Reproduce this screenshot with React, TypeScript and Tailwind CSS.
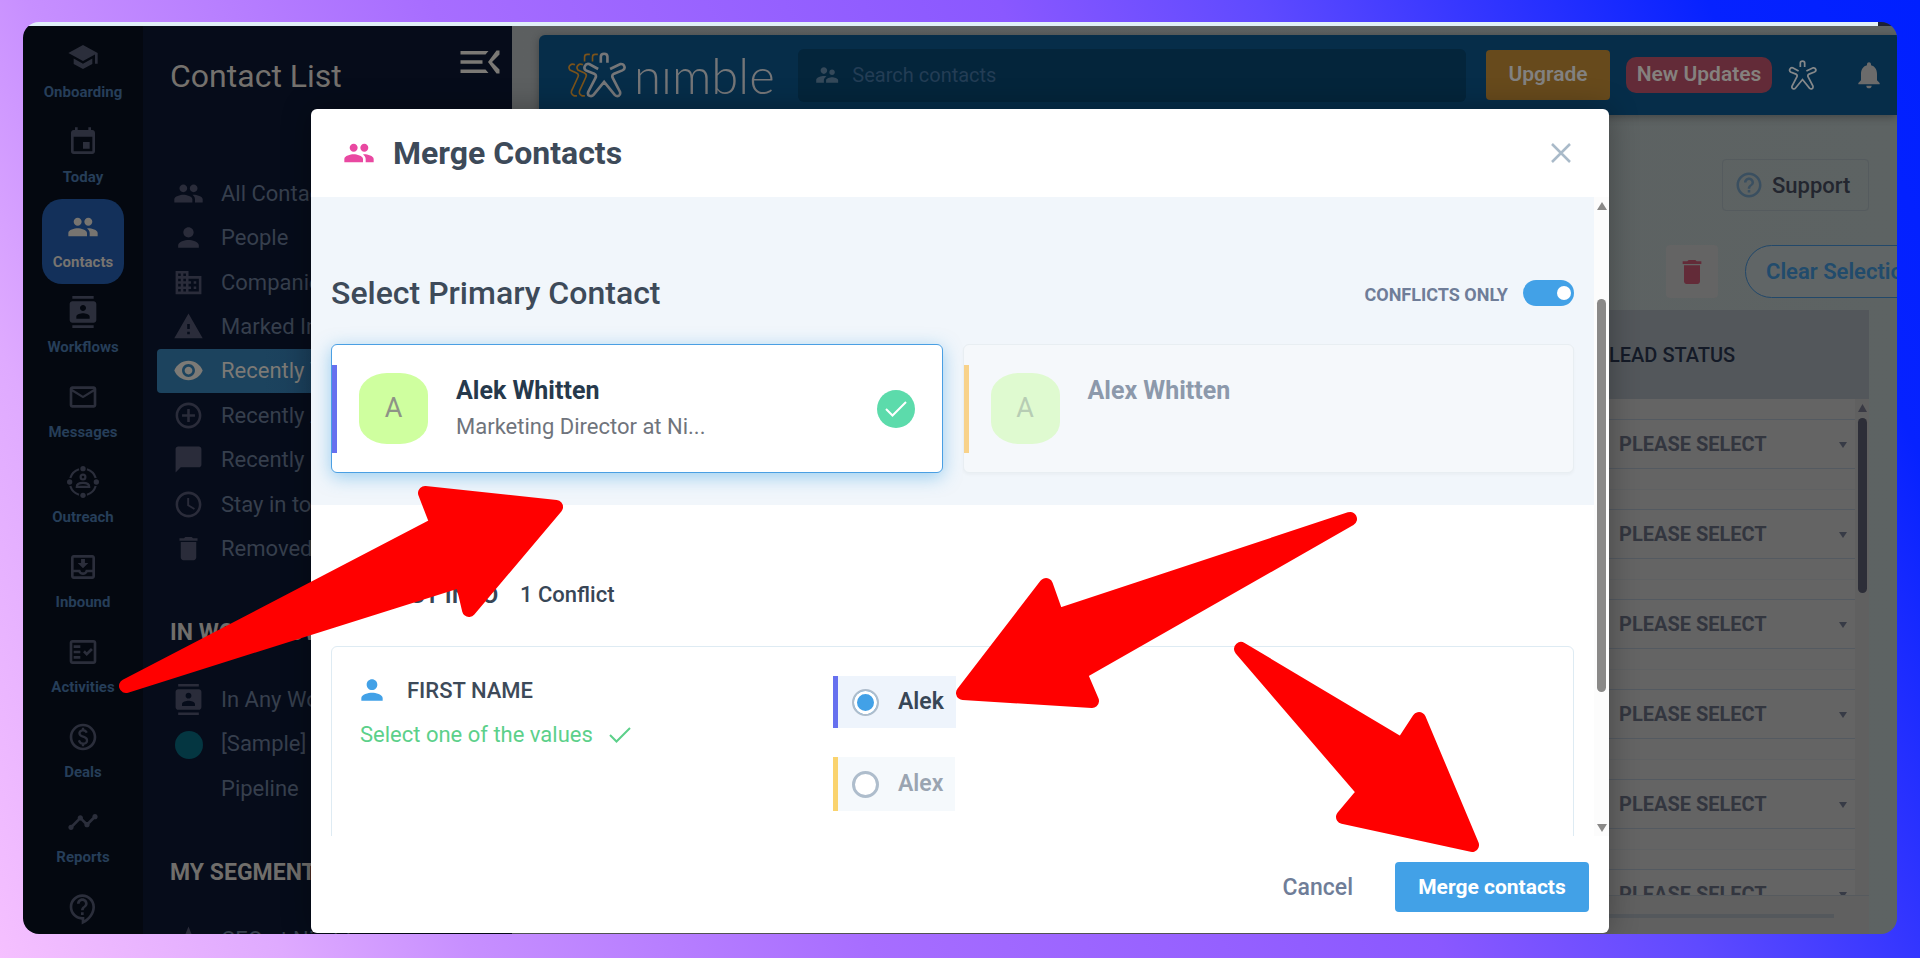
import React from "react";
import type { IconType } from "react-icons";
import {
  MdAccessTime,
  MdChatBubble,
  MdContacts,
  MdControlPoint,
  MdDelete,
  MdDomain,
  MdEvent,
  MdHelpOutline,
  MdMailOutline,
  MdNavigation,
  MdNotifications,
  MdOutlineContactSupport,
  MdOutlineFactCheck,
  MdOutlineMoveToInbox,
  MdOutlinePaid,
  MdPeople,
  MdPerson,
  MdSchool,
  MdSupervisorAccount,
  MdTimeline,
  MdVisibility,
  MdWarning,
} from "react-icons/md";

type IconProps = { className?: string };

function OutreachIcon({ className }: IconProps) {
  return (
    <svg viewBox="0 0 36 36" className={className} fill="none" stroke="currentColor" strokeWidth="2.5">
      <path d="M22.5 3.7a15 15 0 0 1 9.8 9.8M32.3 22.5a15 15 0 0 1-9.8 9.8M13.5 32.3a15 15 0 0 1-9.8-9.8M3.7 13.5a15 15 0 0 1 9.8-9.8" />
      <circle cx="18" cy="12.5" r="2.7" />
      <path d="M11 23.5c0-3.5 4-4.5 7-4.5s7 1 7 4.5z" />
      <g fill="currentColor" stroke="none">
        <circle cx="18" cy="3" r="3" />
        <circle cx="33" cy="18" r="3" />
        <circle cx="18" cy="33" r="3" />
        <circle cx="3" cy="18" r="3" />
      </g>
    </svg>
  );
}

function MenuIcon() {
  return (
    <svg viewBox="0 0 39 24" className="h-6 w-10" fill="currentColor">
      <path d="M0 1h28l-3 3.5H0zM0 10.2h22v3.5H0zM0 19.5h25l3 3.5H0zM36 .5h3v4L31.500 12l7.500 7.500v4h-3L27.500 12z" />
    </svg>
  );
}

function CheckIcon() {
  return (
    <svg viewBox="0 0 22 16" className="h-4 w-[22px]" fill="none" stroke="currentColor" strokeWidth="2">
      <path d="M1 8l6.500 6.500L21 1" />
    </svg>
  );
}

const figure =
  "M136 58V40q0-9 10-9t10 9V58M128 77L101 62q-9-2-13 6t3 13L116 91Q124 95 120 104L98 146q-3 9 4 12t12-3L146 116L178 155q6 6 12 3t4-12L172 104Q168 95 176 91L201 81q9-4 6-12t-12-7L164 77";

function Figure({ className }: IconProps) {
  return (
    <svg viewBox="80 26 132 138" className={className} fill="none" stroke="currentColor" strokeWidth="8">
      <path d={figure} />
    </svg>
  );
}

function Logo() {
  return (
    <div className="flex w-[203px] items-center text-[#757678]">
      <svg viewBox="34 26 178 138" className="h-[46px] w-[59px] shrink-0" fill="none" strokeWidth="5">
        <g stroke="#7a531b">
          <path d="M111 54V41q0-8 8-8h8M87 54V41q0-8 8-8h8" />
          <path d="M82 64q-9-4-15 2t0 14l20 9q8 4 4 12L74 138q-8 14 6 20h8" />
          <path d="M58 64q-9-4-15 2t0 14l20 9q8 4 4 12L50 138q-8 14 6 20h8" />
        </g>
        <path stroke="currentColor" strokeWidth="8" d={figure} />
      </svg>
      <span className="ml-2 font-['Lato'] text-[49px] leading-[58px] font-light">nımble</span>
    </div>
  );
}

const navItems: { label: string; icon: IconType | typeof OutreachIcon; active?: boolean }[] = [
  { label: "Onboarding", icon: MdSchool },
  { label: "Today", icon: MdEvent },
  { label: "Contacts", icon: MdPeople, active: true },
  { label: "Workflows", icon: MdContacts },
  { label: "Messages", icon: MdMailOutline },
  { label: "Outreach", icon: OutreachIcon },
  { label: "Inbound", icon: MdOutlineMoveToInbox },
  { label: "Activities", icon: MdOutlineFactCheck },
  { label: "Deals", icon: MdOutlinePaid },
  { label: "Reports", icon: MdTimeline },
];

const lists: { label: string; icon: IconType; active?: boolean }[] = [
  { label: "All Contacts", icon: MdPeople },
  { label: "People", icon: MdPerson },
  { label: "Companies", icon: MdDomain },
  { label: "Marked Important", icon: MdWarning },
  { label: "Recently Viewed", icon: MdVisibility, active: true },
  { label: "Recently Added", icon: MdControlPoint },
  { label: "Recently Contacted", icon: MdChatBubble },
  { label: "Stay in touch", icon: MdAccessTime },
  { label: "Removed", icon: MdDelete },
];

function SideNav() {
  return (
    <nav className="flex w-[120px] shrink-0 flex-col items-center bg-[#040810] pt-[3px]">
      {navItems.map(({ label, icon: Icon, active }) => (
        <a
          key={label}
          href="#"
          className={`flex h-[85px] w-[82px] shrink-0 flex-col items-center rounded-[20px] pt-3 ${
            active ? "bg-[#13305a] text-[#777470]" : "text-[#2b2e3b]"
          }`}
        >
          <Icon className="size-8" />
          <span className={`mt-2 text-[15px] leading-[22px] font-bold ${active ? "" : "text-[#263e59]"}`}>{label}</span>
        </a>
      ))}
      <a href="#" aria-label="Help" className="pt-[14px] text-[#2b2e3b]">
        <MdOutlineContactSupport className="size-8" />
      </a>
    </nav>
  );
}

function ListRow({ label, icon: Icon, active }: { label: string; icon: IconType; active?: boolean }) {
  return (
    <a
      href="#"
      className={`flex min-h-11 flex-1 items-center gap-[17px] rounded-l-sm pl-4 text-[22px] whitespace-nowrap ${
        active ? "bg-linear-to-r from-[#1c435e] from-30% to-[#153050] text-[#7c7a76]" : "text-[#363f4d]"
      }`}
    >
      <Icon className={`size-[31px] ${active ? "" : "text-[#2a2c3a]"}`} />
      {label}
    </a>
  );
}

function ContactPanel() {
  return (
    <aside className="w-[369px] shrink-0 overflow-hidden bg-[#060c1a]">
      <div className="flex justify-between pr-3 pl-[27px]">
        <h1 className="pt-[30px] text-[32px] leading-10 text-[#74716d]">Contact List</h1>
        <button type="button" aria-label="Collapse menu" className="mt-6 h-6 text-[#7b7975]">
          <MenuIcon />
        </button>
      </div>
      <div className="mt-[75px] ml-[14px] flex h-[400px] flex-col">
        {lists.map((item) => (
          <ListRow key={item.label} {...item} />
        ))}
      </div>
      <h2 className="mt-[42px] pl-[27px] text-[23px] leading-10 font-bold text-[#706e6b]">IN WORKFLOWS</h2>
      <div className="mt-6 ml-[14px] flex flex-col">
        <ListRow label="In Any Workflow" icon={MdContacts} />
        <a href="#" className="flex gap-[18px] pl-[18px] text-[22px] leading-[45px] text-[#363f4d]">
          <span className="mt-[10px] size-7 shrink-0 rounded-full bg-[#043641]" />
          <span className="w-28">[Sample] Pipeline</span>
        </a>
      </div>
      <h2 className="mt-[42px] pl-[27px] text-[23px] leading-10 font-bold text-[#706e6b]">MY SEGMENTS</h2>
      <div className="mt-6 ml-[14px] flex flex-col">
        <ListRow label="CEO at Nimble" icon={MdNavigation} />
      </div>
    </aside>
  );
}

function Header() {
  return (
    <header className="flex h-20 shrink-0 items-center rounded-tl-md bg-[#062d49] pr-3 pl-7 shadow-[0_2px_8px_rgba(0,0,0,0.3)]">
      <Logo />
      <label className="ml-7 flex h-[53px] flex-1 items-center gap-3 rounded-md bg-[#04253b] pl-4 text-[#35495a]">
        <MdSupervisorAccount className="size-7" />
        <input
          type="text"
          aria-label="Search contacts"
          placeholder="Search contacts"
          className="w-full bg-transparent text-[20px] outline-none placeholder:text-[#233d55]"
        />
      </label>
      <button type="button" className="ml-5 h-[50px] w-[124px] rounded-sm bg-[#674a1c] text-[21px] font-semibold text-[#828180]">
        Upgrade
      </button>
      <button
        type="button"
        className="ml-4 h-9 w-[146px] rounded-[10px] bg-[#632b38] text-[21px] font-semibold whitespace-nowrap text-[#85817e]"
      >
        New Updates
      </button>
      <Figure className="ml-4 h-[30px] w-[29px] text-[#85888a]" />
      <MdNotifications className="ml-9 size-8 text-[#6b6b6b]" />
    </header>
  );
}

function LeadTable() {
  return (
    <div className="mt-3 mr-7 ml-5 min-h-0 flex-1">
      <div className="flex h-[586px] overflow-hidden border-b border-[#565a5e] bg-[#646464]">
        <table className="flex-1 self-start">
          <thead>
            <tr className="h-[89px] bg-[#53575b]">
              <th aria-label="Name" />
              <th className="w-[300px] pl-[54px] text-left text-[20px] font-medium text-[#141a27]">LEAD STATUS</th>
            </tr>
          </thead>
          <tbody>
            {[0, 1, 2, 3, 4, 5].map((row) => (
              <tr key={row} className="h-[90px] border-b border-[#5f6163]">
                <td />
                <td>
                  <div className="relative border-y border-[#545a61]">
                    <select
                      aria-label={`Lead status ${row + 1}`}
                      className="h-12 w-full appearance-none bg-transparent pl-16 text-[20px] font-bold text-[#33363f]"
                    >
                      <option>PLEASE SELECT</option>
                    </select>
                    <svg viewBox="0 0 8 6" className="absolute top-[22px] right-2 h-[6px] w-2" fill="#373b46">
                      <path d="M0 0h8L4 6z" />
                    </svg>
                  </div>
                </td>
              </tr>
            ))}
          </tbody>
        </table>
        <div className="flex w-[14px] shrink-0 flex-col items-center bg-[linear-gradient(#53575b_89px,#606060_89px)] pt-[94px]">
          <svg viewBox="0 0 9 8" className="h-2 w-[9px]" fill="#3a3a44">
            <path d="M4.5 0L9 8H0z" />
          </svg>
          <div className="mt-[6px] h-[175px] w-[9px] rounded-full bg-[#2d2e38]" />
        </div>
      </div>
      <div className="h-[38px] bg-[#606060] pt-[18px] pr-[35px]">
        <div className="h-1 bg-[#54585c]" />
      </div>
    </div>
  );
}

function Main() {
  return (
    <main className="flex min-w-0 flex-1 flex-col bg-linear-to-r from-[#5c5f60] to-[#5d6363] pt-[9px] pl-[27px]">
      <Header />
      <div className="mt-11 mr-7 flex justify-end">
        <button
          type="button"
          className="flex h-[52px] w-[147px] items-center gap-2 rounded-sm border border-[#555b5e] pl-[11px] text-[22px] font-medium text-[#23262f]"
        >
          <MdHelpOutline className="size-[30px] text-[#3a4f60]" />
          Support
        </button>
      </div>
      <div className="mt-[34px] -mr-12 flex justify-end gap-[27px]">
        <button type="button" aria-label="Delete" className="flex h-[53px] w-[52px] items-center justify-center rounded-sm bg-[#646464]">
          <MdDelete className="size-8 text-[#632b38]" />
        </button>
        <button
          type="button"
          className="h-[53px] w-[200px] rounded-full border border-[#22486a] bg-[#606566] pl-5 text-left text-[22px] font-semibold whitespace-nowrap text-[#214b6c]"
        >
          Clear Selection
        </button>
      </div>
      <LeadTable />
    </main>
  );
}

function ContactCard({ name, title, selected }: { name: string; title?: string; selected?: boolean }) {
  return (
    <button
      type="button"
      aria-pressed={!!selected}
      className={`flex h-[129px] flex-1 items-center rounded-md border pr-[27px] text-left ${
        selected
          ? "border-[#4a9fe3] bg-white shadow-[0_4px_18px_rgba(66,165,230,0.5)]"
          : "border-[#e8eef2] bg-[#f5f8fb] shadow-[0_2px_3px_rgba(0,0,0,0.03)]"
      }`}
    >
      <span className={`h-[88px] w-[5px] ${selected ? "bg-[#6670ef]" : "bg-[#f8d28a]"}`} />
      <span
        className={`ml-[22px] flex h-[71px] w-[69px] items-center justify-center rounded-[28px/22px] text-[27px] ${
          selected ? "bg-[#cfff9f] text-[#8e9386]" : "bg-[#dffad0] text-[#b7cdb4]"
        }`}
      >
        A
      </span>
      <span className="ml-7 h-[71px] flex-1">
        <span className={`block text-[25px] leading-9 font-bold ${selected ? "text-[#26394c]" : "text-[#8c99ab]"}`}>
          {name}
        </span>
        <span className="block text-[22px] leading-9 text-[#6f747c]">{title}</span>
      </span>
      {selected && (
        <span className="flex size-[38px] items-center justify-center rounded-full bg-[#5cdbab] text-white">
          <CheckIcon />
        </span>
      )}
    </button>
  );
}

function ValueOption({ value, selected }: { value: string; selected?: boolean }) {
  return (
    <label
      className={`flex items-center gap-[19px] border-l-[5px] pr-3 pl-[14px] text-[23px] font-semibold ${
        selected ? "h-[52px] border-[#6670ef] bg-[#eef4fc] text-[#384656]" : "h-[54px] border-[#fad36e] bg-[#f5f9fc] text-[#9aa4b1]"
      }`}
    >
      <input
        type="radio"
        name="first-name"
        defaultChecked={selected}
        className="size-[27px] appearance-none rounded-full border-[3px] border-[#aebdcc] bg-white checked:border-2 checked:bg-[#42a1e7] checked:shadow-[inset_0_0_0_3px_#fff]"
      />
      {value}
    </label>
  );
}

function MergeModal() {
  return (
    <section
      role="dialog"
      aria-label="Merge Contacts"
      className="absolute top-[87px] right-[288px] bottom-px left-[288px] flex flex-col overflow-hidden rounded-md bg-white shadow-[0_0_30px_rgba(0,0,0,0.3)]"
    >
      <header className="flex h-[88px] shrink-0 items-center pr-8 pl-8">
        <MdPeople className="size-8 text-[#e948a1]" />
        <h2 className="ml-[18px] flex-1 text-[32px] font-bold text-[#3d4a59]">Merge Contacts</h2>
        <button type="button" aria-label="Close" className="p-1 text-[#a9bac9]">
          <svg viewBox="0 0 24 24" className="size-6" fill="none" stroke="currentColor" strokeWidth="2.5">
            <path d="M3 3l18 18M21 3L3 21" />
          </svg>
        </button>
      </header>
      <div className="flex min-h-0 flex-1">
        <div className="flex-1 overflow-hidden">
          <div className="bg-[#f1f6fb] px-5 pt-[76px] pb-8">
            <div className="mb-[31px] flex items-center justify-between">
              <h3 className="text-[32px] leading-10 font-medium text-[#3d4a59]">Select Primary Contact</h3>
              <label className="flex items-center gap-[15px] text-[18px] leading-8 font-bold text-[#6f7d98]">
                <span className="pt-1">CONFLICTS ONLY</span>
                <input
                  type="checkbox"
                  role="switch"
                  defaultChecked
                  className="flex h-[26px] w-[51px] appearance-none items-center justify-end rounded-full bg-[#42a1e7] pr-[3px] after:size-[14px] after:rounded-full after:bg-white"
                />
              </label>
            </div>
            <div className="flex gap-5">
              <ContactCard name="Alek Whitten" title="Marketing Director at Ni..." selected />
              <ContactCard name="Alex Whitten" />
            </div>
          </div>
          <div className="px-5 pt-[70px]">
            <h3 className="mb-[31px] flex gap-[22px] text-[22px] leading-10 font-medium text-[#384656]">
              <span className="w-[167px] text-right text-[24px] font-semibold whitespace-nowrap">CONTACT INFO</span>
              1 Conflict
            </h3>
            <div className="flex h-60 rounded-md border border-[#deebf3] pt-[29px] pl-7">
              <div className="w-[473px]">
                <h4 className="flex h-7 items-center gap-[19px] text-[22px] font-medium text-[#3d4a59]">
                  <MdPerson className="-ml-1 size-8 text-[#42a1e7]" />
                  FIRST NAME
                </h4>
                <p className="mt-4 flex items-center gap-4 text-[22px] leading-[30px] text-[#5cd08a]">
                  Select one of the values
                  <CheckIcon />
                </p>
              </div>
              <div className="flex flex-col items-start gap-[29px]">
                <ValueOption value="Alek" selected />
                <ValueOption value="Alex" />
              </div>
            </div>
          </div>
        </div>
        <div className="flex w-[15px] flex-col items-center bg-[#fcfcfc] pt-[5px] pb-1">
          <svg viewBox="0 0 10 8" className="h-2 w-[10px]" fill="#8a8988">
            <path d="M5 0l5 8H0z" />
          </svg>
          <div className="mt-[89px] h-[393px] w-[9px] rounded-full bg-[#8a8988]" />
          <svg viewBox="0 0 10 8" className="mt-auto h-2 w-[10px]" fill="#8a8988">
            <path d="M0 0h10L5 8z" />
          </svg>
        </div>
      </div>
      <footer className="flex h-[97px] shrink-0 items-center justify-end gap-[42px] pt-1 pr-5">
        <button type="button" className="pt-1 text-[23px] font-medium text-[#6f7d98]">
          Cancel
        </button>
        <button type="button" className="h-[50px] w-[194px] rounded-sm bg-[#42a1e7] pt-[2px] text-[21px] font-bold text-white">
          Merge contacts
        </button>
      </footer>
    </section>
  );
}

function Arrows() {
  return (
    <svg
      viewBox="0 0 1920 958"
      className="pointer-events-none absolute inset-0 size-full"
      fill="#ff0000"
      stroke="#ff0000"
      strokeWidth="14"
      strokeLinejoin="round"
    >
      <path d="M126 686L437 524L425 493L556 507L469 610L462 580z" />
      <path d="M1350 519L1057 616L1046 585L963 693L1092 701L1080 673z" />
      <path d="M1241 649L1402 745L1419 719L1472 845L1343 817L1364 792z" />
    </svg>
  );
}

export default function App() {
  return (
    <div className="relative h-screen overflow-hidden bg-[linear-gradient(65deg,#f5c0ff_0%,#dfaaff_12%,#c78fff_20%,#a76dff_37%,#8a58ff_61%,#5f4aff_72%,#3436ff_81%,#0622ff_91%,#0020ff_100%)] px-[23px] pt-[22px] pb-6 font-['Roboto',sans-serif]">
      <div className="relative flex h-full flex-col overflow-hidden rounded-2xl">
        <div className="flex h-1 shrink-0">
          <div className="flex-1 bg-[#e1f0f8]" />
          <div className="w-[19px] bg-[#1d2236]" />
        </div>
        <div className="flex min-h-0 flex-1">
          <SideNav />
          <ContactPanel />
          <Main />
        </div>
        <MergeModal />
      </div>
      <Arrows />
    </div>
  );
}
